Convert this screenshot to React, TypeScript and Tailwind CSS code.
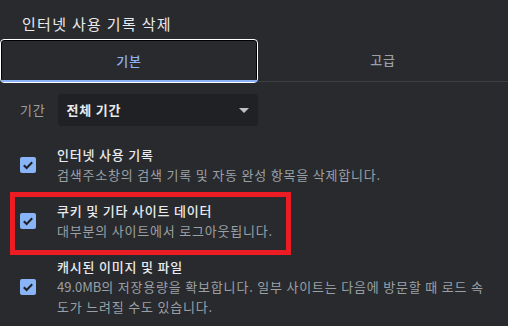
import React from "react";

const font = { fontFamily: '"Noto Sans CJK KR", "Noto Sans", sans-serif' };

function Check() {
  return (
    <div className="w-4 h-4 shrink-0 rounded-[2px] bg-[#8ab4f8] flex items-center justify-center">
      <svg width="16" height="16" viewBox="0 0 16 16">
        <path d="M3.8 8.2 L6.6 11 L12.2 5.2" fill="none" stroke="#202124" strokeWidth="2" />
      </svg>
    </div>
  );
}

function Item({ title, lines, boxed }: { title: string; lines: React.ReactNode[]; boxed?: boolean }) {
  return (
    <div className="relative flex items-center py-2 pl-5 gap-[21px]">
      <Check />
      <div className="text-[13px] leading-5 whitespace-nowrap tracking-[0.8px]">
        <div className="text-[#e8eaed] font-medium">{title}</div>
        {lines.map((l, i) => (
          <div key={i} className="text-[#9aa0a6]">
            {l}
          </div>
        ))}
      </div>
      {boxed && (
        <div className="absolute left-[10px] top-[-1px] w-[281px] h-[63px] border-[5px] border-[#ec1c24] pointer-events-none" />
      )}
    </div>
  );
}

export default function App() {
  return (
    <div className="w-[508px] h-[326px] overflow-hidden bg-[#292a2d]" style={font}>
      <div className="pt-[14px] pl-[22px] mb-[5px] text-[15px] leading-5 tracking-[1.3px] text-[#e8eaed]">
        인터넷 사용 기록 삭제
      </div>

      <div className="flex items-start">
        <div className="relative w-[258px] h-[44px] border border-white rounded-[4px] shadow-[inset_0_0_0_1px_#000] flex items-center justify-center text-[13px] tracking-[0.8px] font-medium text-[#8ab4f8]">
          기본
          <div className="absolute left-0 right-0 bottom-0 h-[2px] bg-[#8ab4f8]" />
        </div>
        <div className="flex-1 h-[43px] border-b border-[#3c4043] flex items-center justify-center text-[13px] tracking-[0.8px] font-medium text-[#9aa0a6]">
          고급
        </div>
      </div>

      <div className="mt-[11px] flex items-center pl-5 gap-3 tracking-[0.8px]">
        <span className="text-[13px] text-[#9aa0a6]">기간</span>
        <div className="w-[200px] h-[32px] rounded-[4px] bg-[#202124] flex items-center justify-between pl-[9px] pr-[9px]">
          <span className="text-[13px] font-bold text-[#e8eaed]">전체 기간</span>
          <svg width="10" height="5" viewBox="0 0 10 5">
            <path d="M0 0 L10 0 L5 5 Z" fill="#bdc1c6" />
          </svg>
        </div>
      </div>

      <div className="mt-[11px]">
        <Item title="인터넷 사용 기록" lines={["검색주소창의 검색 기록 및 자동 완성 항목을 삭제합니다."]} />
        <Item title="쿠키 및 기타 사이트 데이터" lines={["대부분의 사이트에서 로그아웃됩니다."]} boxed />
        <Item
          title="캐시된 이미지 및 파일"
          lines={[
            <>
              <span className="tracking-normal">49.0MB</span>의 저장용량을 확보합니다. 일부 사이트는 다음에 방문할 때 로드 속
            </>,
            "도가 느려질 수도 있습니다.",
          ]}
        />
      </div>
    </div>
  );
}
